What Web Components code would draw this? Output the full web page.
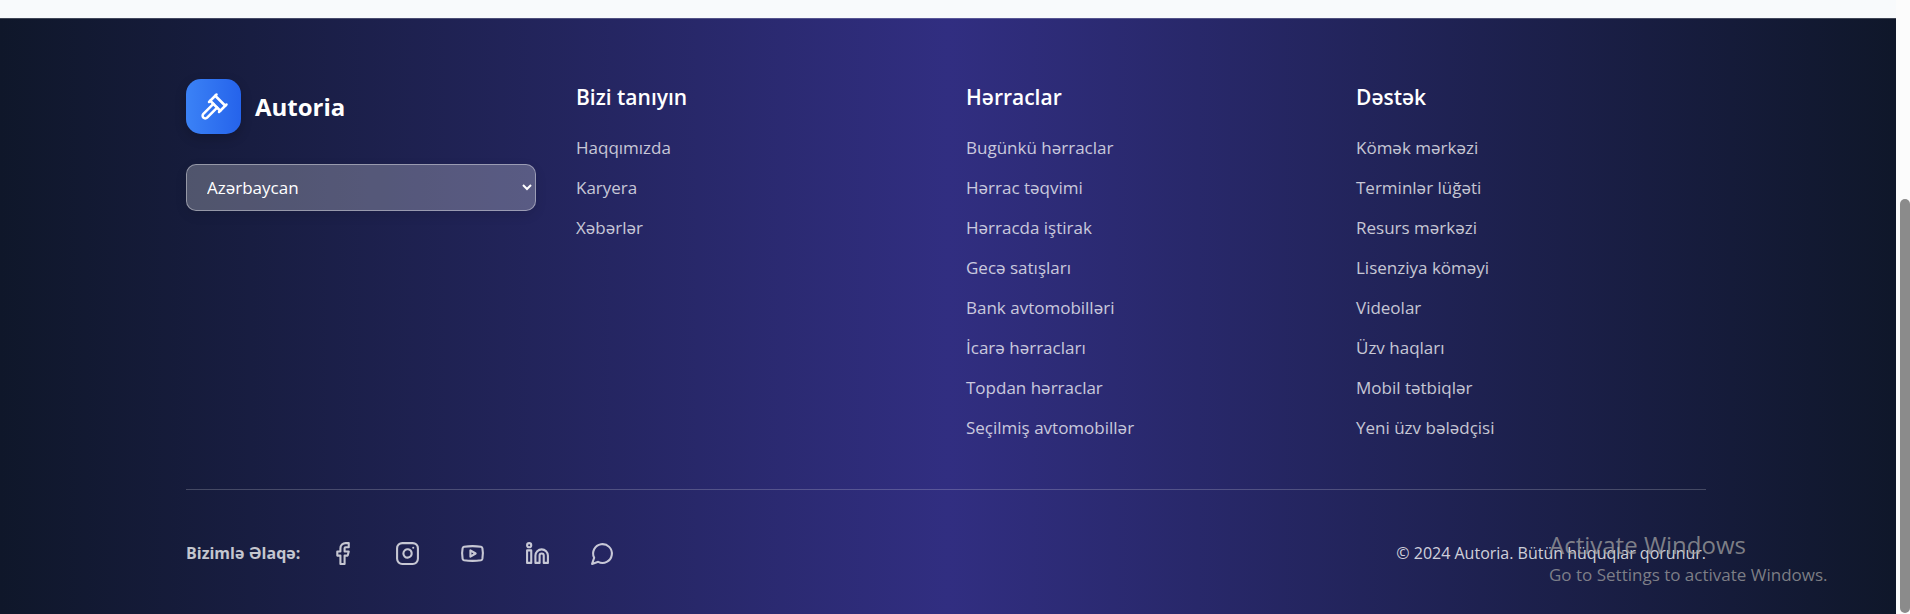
<!DOCTYPE html>
<html lang="az">
<head>
<meta charset="utf-8">
<title>Autoria</title>
<style>
  html, body { margin: 0; }
  body { font-family: "Open Sans", "Noto Sans", sans-serif; background: #f8fafc; }
</style>
</head>
<body>
<app-page>
  <site-footer>
    <brand-block slot="columns"></brand-block>
    <link-column slot="columns" heading="Bizi tanıyın">
      <a href="#haqqimizda">Haqqımızda</a>
      <a href="#karyera">Karyera</a>
      <a href="#xeberler">Xəbərlər</a>
    </link-column>
    <link-column slot="columns" heading="Hərraclar">
      <a href="#bugunku">Bugünkü hərraclar</a>
      <a href="#teqvim">Hərrac təqvimi</a>
      <a href="#istirak">Hərracda iştirak</a>
      <a href="#gece">Gecə satışları</a>
      <a href="#bank">Bank avtomobilləri</a>
      <a href="#icare">İcarə hərracları</a>
      <a href="#topdan">Topdan hərraclar</a>
      <a href="#secilmis">Seçilmiş avtomobillər</a>
    </link-column>
    <link-column slot="columns" heading="Dəstək">
      <a href="#komek">Kömək mərkəzi</a>
      <a href="#terminler">Terminlər lüğəti</a>
      <a href="#resurs">Resurs mərkəzi</a>
      <a href="#lisenziya">Lisenziya köməyi</a>
      <a href="#videolar">Videolar</a>
      <a href="#haqlar">Üzv haqları</a>
      <a href="#mobil">Mobil tətbiqlər</a>
      <a href="#yeni">Yeni üzv bələdçisi</a>
    </link-column>
    <social-bar slot="social">Bizimlə Əlaqə:</social-bar>
    <span slot="copyright">© 2024 Autoria. Bütün hüquqlar qorunur.</span>
  </site-footer>
  <page-scrollbar slot="scrollbar"></page-scrollbar>
  <activation-notice slot="overlay">
    <span slot="title">Activate Windows</span>
    Go to Settings to activate Windows.
  </activation-notice>
</app-page>

<script>
const define = (name, html, setup) => {
  const template = document.createElement('template');
  template.innerHTML = html;
  customElements.define(name, class extends HTMLElement {
    constructor() {
      super();
      this.attachShadow({ mode: 'open' }).append(template.content.cloneNode(true));
    }
    connectedCallback() { if (setup) setup(this); }
  });
};

define('app-page', `
  <style>
    :host { display: flex; position: relative; min-height: 100vh; }
    main { flex: 1; min-width: 0; display: flex; flex-direction: column; padding-top: 18px; }
  </style>
  <main><slot></slot></main>
  <slot name="scrollbar"></slot>
  <slot name="overlay"></slot>`);

define('site-footer', `
  <style>
    :host { display: block; flex: 1; }
    footer {
      box-sizing: border-box; min-height: 100%;
      padding: 60px 24px 40px 20px;
      border-top: 1px solid rgba(255,255,255,.2);
      background: linear-gradient(to right, #0f172a, #312e81 50%, #0f172a) border-box;
    }
    .inner { max-width: 1520px; margin: 0 auto; }
    .columns { display: grid; grid-template-columns: repeat(4, minmax(0, 1fr)); gap: 40px; }
    .bottom {
      display: flex; flex-wrap: wrap; justify-content: space-between; align-items: center; gap: 20px;
      margin-top: 49px; padding-top: 50px;
      border-top: 1px solid rgba(255,255,255,.2);
    }
    .copy { font-size: 16px; line-height: 26px; color: rgba(255,255,255,.8); }
    @media (max-width: 900px) { .columns { grid-template-columns: repeat(2, minmax(0, 1fr)); } }
  </style>
  <footer>
    <div class="inner">
      <div class="columns"><slot name="columns"></slot></div>
      <div class="bottom">
        <slot name="social"></slot>
        <div class="copy"><slot name="copyright"></slot></div>
      </div>
    </div>
  </footer>`);

define('brand-block', `
  <style>
    :host { display: flex; flex-direction: column; gap: 30px; }
    .brand { display: flex; align-items: center; gap: 14px; color: #fff; text-decoration: none; }
    .mark {
      display: grid; place-items: center; width: 55px; height: 55px; border-radius: 15px;
      background: linear-gradient(to right, #3b82f6, #2563eb);
      box-shadow: 0 4px 12px rgba(0,0,0,.2);
    }
    svg { width: 30px; height: 30px; }
    .name { font-size: 24px; line-height: 32px; font-weight: 700; }
    select {
      width: 100%; height: 47px; box-sizing: border-box; padding: 0 6px 0 16px;
      border: 1px solid rgba(255,255,255,.4); border-radius: 10px;
      background-color: rgba(255,255,255,.25); color: #fff;
      font-family: inherit; font-size: 17px;
      box-shadow: 0 4px 12px rgba(0,0,0,.1);
    }
    option { color: #111827; }
  </style>
  <a class="brand" href="#home">
    <span class="mark">
      <svg viewBox="0 0 24 24" fill="none" stroke="#fff" stroke-width="2" stroke-linecap="round" stroke-linejoin="round" aria-hidden="true">
        <path d="m14.5 12.5-8 8a2.119 2.119 0 1 1-3-3l8-8"/><path d="m16 16 6-6"/><path d="m8 8 6-6"/><path d="m9 7 8 8"/><path d="m21 11-8-8"/>
      </svg>
    </span>
    <span class="name">Autoria</span>
  </a>
  <select aria-label="Dil"><option>Azərbaycan</option></select>`);

define('link-column', `
  <style>
    :host { display: block; }
    h2 { margin: 0 0 21px; font-size: 21px; line-height: 36px; font-weight: 600; color: #fff; }
    nav { display: flex; flex-direction: column; align-items: flex-start; gap: 16px; }
    ::slotted(a) { font-size: 17px; line-height: 24px; color: rgba(255,255,255,.75); text-decoration: none; }
    ::slotted(a:hover) { color: #fff; }
  </style>
  <h2></h2>
  <nav><slot></slot></nav>`, host => {
    const heading = host.getAttribute('heading');
    host.shadowRoot.querySelector('h2').textContent = heading;
    host.shadowRoot.querySelector('nav').setAttribute('aria-label', heading);
  });

define('social-bar', `
  <style>
    :host { display: flex; align-items: center; gap: 30px; color: rgba(255,255,255,.75); }
    .label { font-size: 16px; line-height: 26px; font-weight: 700; white-space: nowrap; }
    .icons { display: flex; gap: 40px; }
    a { display: block; color: inherit; }
    svg { display: block; width: 25px; height: 25px; fill: none; stroke: currentColor; stroke-width: 2; stroke-linecap: round; stroke-linejoin: round; }
  </style>
  <span class="label"><slot></slot></span>
  <div class="icons">
    <a href="#facebook" aria-label="Facebook"><svg viewBox="0 0 24 24"><path d="M18 2h-3a5 5 0 0 0-5 5v3H7v4h3v8h4v-8h3l1-4h-4V7a1 1 0 0 1 1-1h3z"/></svg></a>
    <a href="#instagram" aria-label="Instagram"><svg viewBox="0 0 24 24"><rect x="2" y="2" width="20" height="20" rx="5"/><path d="M16 11.37A4 4 0 1 1 12.63 8 4 4 0 0 1 16 11.37z"/><path d="M17.5 6.5h.01"/></svg></a>
    <a href="#youtube" aria-label="YouTube"><svg viewBox="0 0 24 24"><path d="M2.5 17a24.12 24.12 0 0 1 0-10 2 2 0 0 1 1.4-1.4 49.56 49.56 0 0 1 16.2 0A2 2 0 0 1 21.5 7a24.12 24.12 0 0 1 0 10 2 2 0 0 1-1.4 1.4 49.55 49.55 0 0 1-16.2 0A2 2 0 0 1 2.5 17"/><path d="m10 15 5-3-5-3z"/></svg></a>
    <a href="#linkedin" aria-label="LinkedIn"><svg viewBox="0 0 24 24"><path d="M16 8a6 6 0 0 1 6 6v7h-4v-7a2 2 0 0 0-4 0v7h-4v-7a6 6 0 0 1 6-6z"/><rect x="2" y="9" width="4" height="12"/><circle cx="4" cy="4" r="2"/></svg></a>
    <a href="#whatsapp" aria-label="WhatsApp"><svg viewBox="0 0 24 24"><path d="M7.9 20A9 9 0 1 0 4 16.1L2 22Z"/></svg></a>
  </div>`);

define('page-scrollbar', `
  <style>
    :host { display: flex; flex-direction: column; width: 14px; padding-left: 4px; box-sizing: border-box; background: #fcfcfc; }
    .before { flex: 199; }
    .thumb { flex: 414; border-radius: 6px; background: #8b8b8b; }
    .after { flex: 1; }
  </style>
  <div class="before"></div><div class="thumb"></div><div class="after"></div>`);

define('activation-notice', `
  <style>
    :host { position: absolute; right: 72px; bottom: 26px; width: 289px; pointer-events: none; color: rgba(160,160,160,.75); font-size: 17px; line-height: 26px; white-space: nowrap; }
    .title { font-size: 24px; line-height: 34px; }
  </style>
  <div class="title"><slot name="title"></slot></div>
  <div><slot></slot></div>`);
</script>
</body>
</html>
